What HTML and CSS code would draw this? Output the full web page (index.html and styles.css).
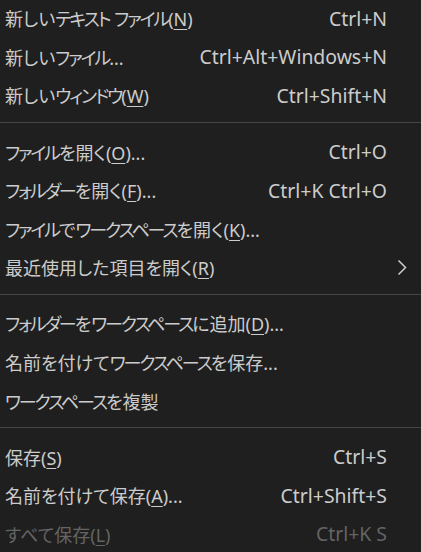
FILE: index.html
```html
<!DOCTYPE html>
<html lang="ja">
<head>
<meta charset="utf-8">
<link rel="stylesheet" href="styles.css">
</head>
<body>
<div class="menu">
  <div class="item"><span class="label">新しい<span class="kata">テキスト</span> <span class="kata">ファイル</span>(<u>N</u>)</span><span class="key">Ctrl+N</span><span class="sub"></span></div>
  <div class="item"><span class="label">新しい<span class="kata">ファイル</span>...</span><span class="key">Ctrl+Alt+Windows+N</span><span class="sub"></span></div>
  <div class="item"><span class="label">新しい<span class="kata">ウィンドウ</span>(<u>W</u>)</span><span class="key">Ctrl+Shift+N</span><span class="sub"></span></div>
  <div class="sep"></div>
  <div class="item"><span class="label"><span class="kata">ファイル</span>を開く(<u>O</u>)...</span><span class="key">Ctrl+O</span><span class="sub"></span></div>
  <div class="item"><span class="label"><span class="kata">フォルダー</span>を開く(<u>F</u>)...</span><span class="key">Ctrl+K Ctrl+O</span><span class="sub"></span></div>
  <div class="item"><span class="label"><span class="kata">ファイル</span>で<span class="kata">ワークスペース</span>を開く(<u>K</u>)...</span><span class="key"></span><span class="sub"></span></div>
  <div class="item"><span class="label">最近使用した項目を開く(<u>R</u>)</span><span class="key"></span><span class="sub"><svg class="chev" width="10" height="17" viewBox="0 0 10 17"><path d="M1.5 1.5 L8.5 8.5 L1.5 15.5" fill="none" stroke="#cccccc" stroke-width="1.5"/></svg></span></div>
  <div class="sep"></div>
  <div class="item"><span class="label"><span class="kata">フォルダー</span>を<span class="kata">ワークスペース</span>に追加(<u>D</u>)...</span><span class="key"></span><span class="sub"></span></div>
  <div class="item"><span class="label">名前を付けて<span class="kata">ワークスペース</span>を保存...</span><span class="key"></span><span class="sub"></span></div>
  <div class="item"><span class="label"><span class="kata">ワークスペース</span>を複製</span><span class="key"></span><span class="sub"></span></div>
  <div class="sep"></div>
  <div class="item"><span class="label">保存(<u>S</u>)</span><span class="key">Ctrl+S</span><span class="sub"></span></div>
  <div class="item"><span class="label">名前を付けて保存(<u>A</u>)...</span><span class="key">Ctrl+Shift+S</span><span class="sub"></span></div>
  <div class="item disabled"><span class="label">すべて保存(<u>L</u>)</span><span class="key">Ctrl+K S</span><span class="sub"></span></div>
</div>
</body>
</html>
```

FILE: styles.css
```css
html, body {
  margin: 0;
  padding: 0;
  background: #1f1f1f;
  height: 100%;
  overflow: hidden;
}
.menu {
  margin-top: -1px;
  color: #cccccc;
  font-family: "Noto Sans", "Noto Sans CJK JP", sans-serif;
  font-size: 18px;
  font-feature-settings: "palt";
}
.item {
  display: grid;
  grid-template-columns: 1fr auto 34px;
  align-items: center;
  height: 38.6px;
  padding-left: 5px;
  white-space: nowrap;
}
.kata {
  letter-spacing: -2.1px;
}
.label u, .key u {
  text-decoration-thickness: 1px;
  text-underline-offset: 3px;
}
.key {
  text-align: right;
  font-size: 19.4px;
}
.sub {
  display: flex;
  align-items: center;
  padding-left: 10px;
}
.chev {
  display: block;
}
.sep {
  height: 1px;
  background: #454545;
  margin: 7.5px 0 9px;
}
.disabled {
  color: #646464;
}
```
